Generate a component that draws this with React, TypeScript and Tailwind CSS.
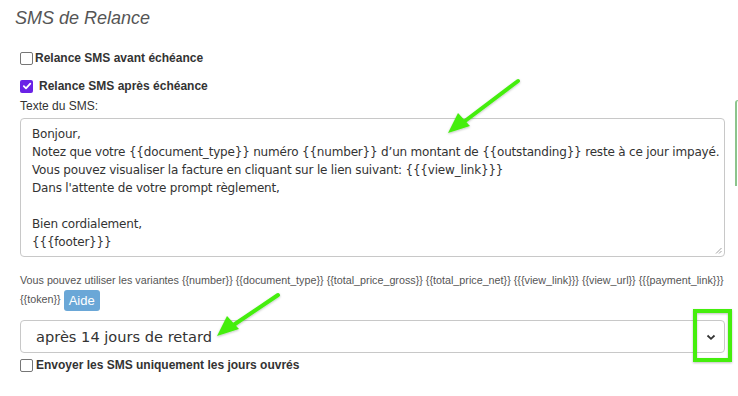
import React from "react";

function Box({ checked }: { checked?: boolean }) {
  if (checked) {
    return (
      <span className="inline-flex h-[13px] w-[13px] shrink-0 items-center justify-center rounded-[2px] bg-[#6a22e6]">
        <svg width="10" height="10" viewBox="0 0 10 10">
          <path d="M1.8 5.2 L4 7.4 L8.3 2.6" fill="none" stroke="white" strokeWidth="1.8" strokeLinecap="round" strokeLinejoin="round" />
        </svg>
      </span>
    );
  }
  return <span className="inline-block h-[13px] w-[13px] shrink-0 rounded-[2px] border border-[#767676] bg-white" />;
}

export default function App() {
  const sms = `Bonjour,
Notez que votre {{document_type}} numéro {{number}} d’un montant de {{outstanding}} reste à ce jour impayé.
Vous pouvez visualiser la facture en cliquant sur le lien suivant: {{{view_link}}}
Dans l'attente de votre prompt règlement,

Bien cordialement,
{{{footer}}}`;
  return (
    <div className="relative h-[396px] w-[738px] overflow-hidden bg-white" style={{ fontFamily: '"Liberation Sans", Arial, sans-serif' }}>
      <div className="pl-[15px] pt-[6px] text-[18px] italic leading-[24px] text-[#555]">SMS de Relance</div>
      <div className="pl-[20px] pr-[13px]">
        <div className="mt-[21px] flex items-center gap-[2px] text-[12px] font-bold leading-[14px] text-[#333]">
          <Box />
          <span>Relance SMS avant échéance</span>
        </div>
        <div className="mt-[14px] flex items-center gap-[6px] text-[12px] font-bold leading-[14px] text-[#333]">
          <Box checked />
          <span>Relance SMS après échéance</span>
        </div>
        <div className="mt-[6px] text-[12px] leading-[14px] text-[#333]">Texte du SMS:</div>
        <div className="relative mt-[5px] h-[139px] w-[705px] rounded-[4px] border border-[#c8c8c8] bg-white px-[11px] pt-[6px]">
          <div
            className="whitespace-pre text-[12px] leading-[18px] tracking-[-0.19px] text-[#333]"
            style={{ fontFamily: '"DejaVu Sans", Verdana, sans-serif' }}
          >
            {sms}
          </div>
          <svg className="absolute bottom-[2px] right-[2px]" width="7" height="7" viewBox="0 0 7 7">
            <path d="M6.5 1 L1 6.5 M6.5 4 L4 6.5" stroke="#888" strokeWidth="0.8" />
          </svg>
        </div>
        <div className="mt-[14px] w-[705px] text-[10.75px] leading-[19px] text-[#555]">
          Vous pouvez utiliser les variantes {"{{number}}"} {"{{document_type}}"} {"{{total_price_gross}}"} {"{{total_price_net}}"} {"{{{view_link}}}"} {"{{view_url}}"} {"{{{payment_link}}}"}{" "}
          {"{{token}}"}{" "}
          <span className="inline-block rounded-[3px] bg-[#6aa7d7] px-[5px] align-middle text-[13px] leading-[21px] text-white">Aide</span>
        </div>
        <div className="mt-[9px] flex h-[33px] w-[705px] items-center justify-between rounded-[4px] border border-[#c8c8c8] bg-white pl-[15px] pr-[8px]">
          <span className="text-[#333]" style={{ fontFamily: '"DejaVu Sans", Verdana, sans-serif', fontSize: "14.6px" }}>
            après 14 jours de retard
          </span>
          <svg width="10" height="8" viewBox="0 0 10 8">
            <path d="M1.5 2.5 L5 5.8 L8.5 2.5" fill="none" stroke="#333" strokeWidth="1.8" />
          </svg>
        </div>
        <div className="mt-[5px] flex items-center gap-[3px] text-[12px] font-bold leading-[14px] text-[#333]">
          <Box />
          <span>Envoyer les SMS uniquement les jours ouvrés</span>
        </div>
      </div>

      {/* right-edge green tab */}
      <div className="absolute left-[735px] top-[100px] h-[86px] w-[6px] rounded-tl-[3px] border-l-2 border-t border-[#8cc48c]" />

      {/* annotations */}
      <svg className="pointer-events-none absolute left-0 top-0" width="738" height="396" viewBox="0 0 738 396">
        <defs>
          <filter id="sh" x="-20%" y="-20%" width="140%" height="140%">
            <feDropShadow dx="0" dy="1" stdDeviation="1" floodColor="#000" floodOpacity="0.25" />
          </filter>
        </defs>
        <g filter="url(#sh)">
          <line x1="518" y1="81" x2="465" y2="121" stroke="#44ee11" strokeWidth="4" strokeLinecap="round" />
          <polygon points="448,133 458,113 470,126" fill="#44ee11" />
          <line x1="278" y1="295" x2="232" y2="326" stroke="#44ee11" strokeWidth="4" strokeLinecap="round" />
          <polygon points="217,336 227,316 239,329" fill="#44ee11" />
          <rect x="695" y="311" width="35" height="49" fill="none" stroke="#44ee11" strokeWidth="4" />
        </g>
      </svg>
    </div>
  );
}
